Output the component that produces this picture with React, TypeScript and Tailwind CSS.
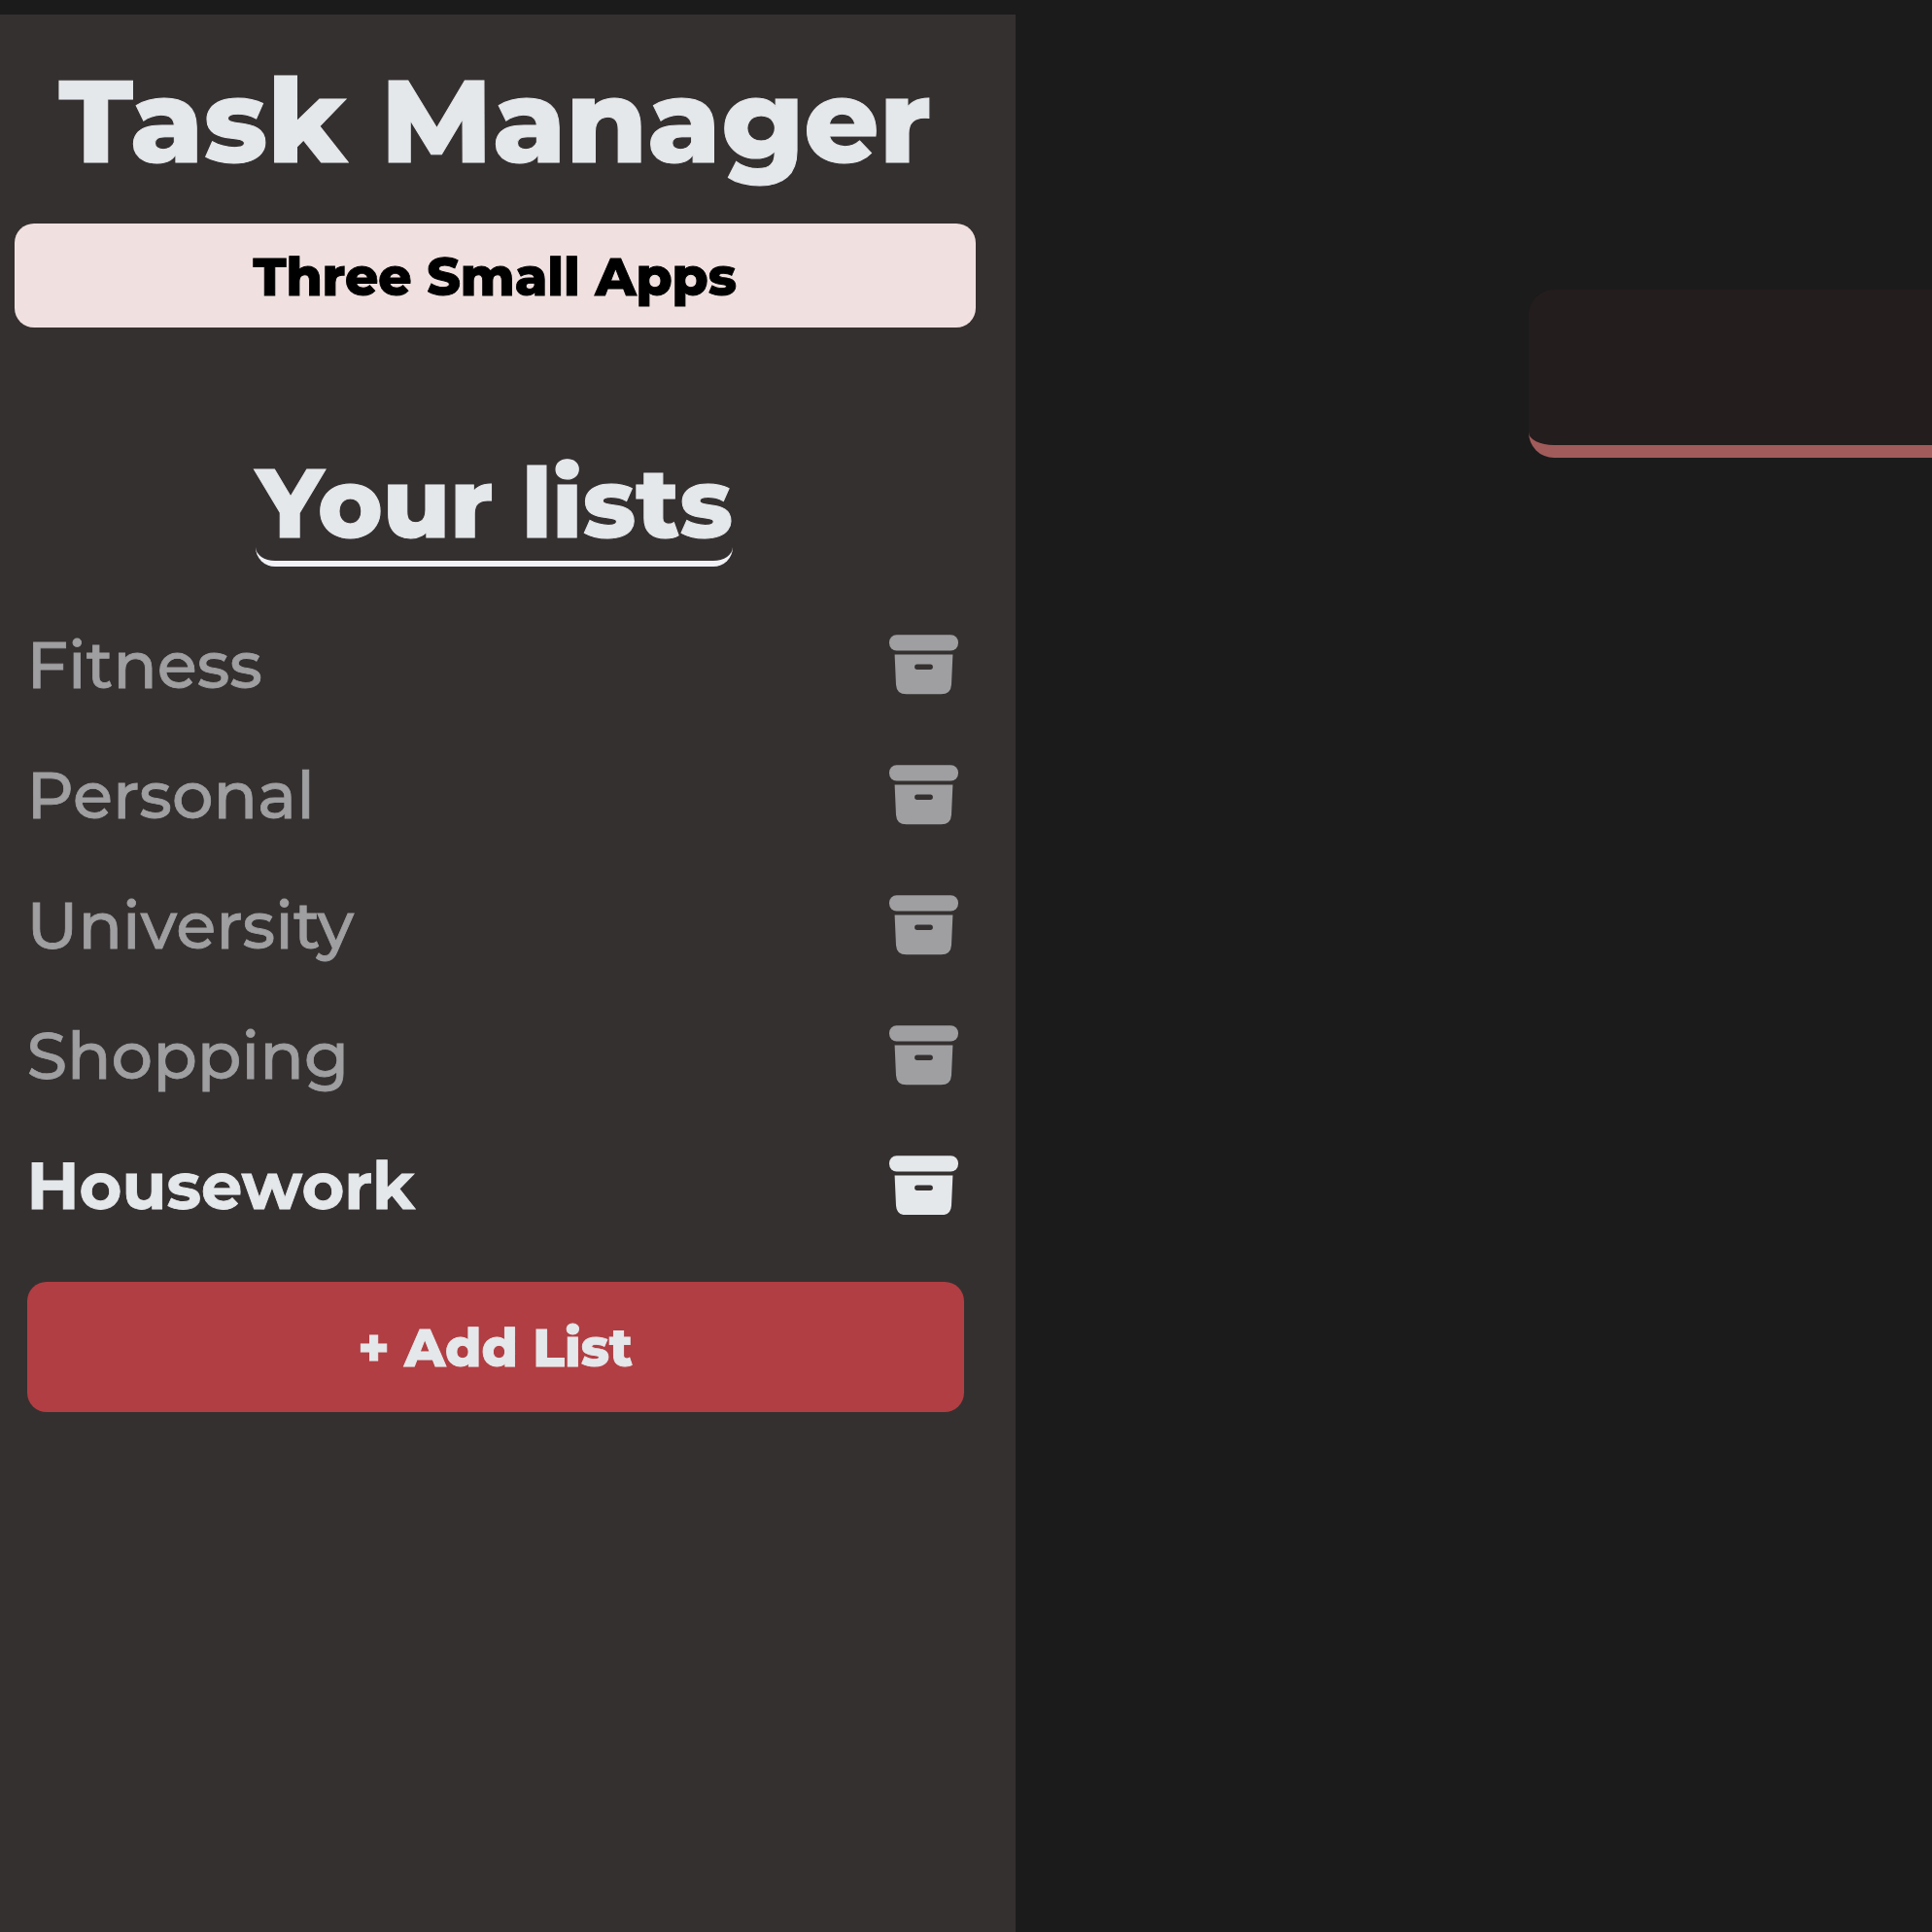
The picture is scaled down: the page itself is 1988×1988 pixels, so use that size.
type TaskList = { name: string; active?: boolean };

const lists: TaskList[] = [
  { name: "Fitness" },
  { name: "Personal" },
  { name: "University" },
  { name: "Shopping" },
  { name: "Housework", active: true },
];

function ArchiveIcon() {
  return (
    <svg className="h-[61.5px] w-[71px]" viewBox="0 0 71 61.5" fill="currentColor" aria-hidden="true">
      <rect x="0" y="0.2" width="71" height="16.2" rx="7.6" />
      <path
        fillRule="evenodd"
        d="M5.6 20.5H65.4L64 51.4Q63.4 61.3 53.4 61.3H17.6Q7.6 61.3 7 51.4ZM28.8 30.5A2.7 2.7 0 0 0 28.8 35.9H42.2A2.7 2.7 0 0 0 42.2 30.5Z"
      />
    </svg>
  );
}

function ListRow({ name, active }: TaskList) {
  return (
    <li
      className={
        active
          ? "flex h-[133.9px] items-center justify-between font-bold text-[#e5e8eb]"
          : "flex h-[133.9px] items-center justify-between font-medium text-[#9f9fa1]"
      }
    >
      <span className="text-[67px] leading-[82px] [-webkit-text-stroke:0.8px]">{name}</span>
      <ArchiveIcon />
    </li>
  );
}

export default function App() {
  return (
    <div className="flex h-[1988px] w-[1988px] overflow-hidden bg-[#1b1b1b] pt-[15px] font-['Montserrat','Inter',sans-serif]">
      <aside className="flex w-[1045px] shrink-0 flex-col bg-[#353030] pt-[34px] pr-[41px] pl-[14.5px]">
        <h1 className="text-center text-[120.4px] leading-[150px] font-extrabold whitespace-nowrap text-[#e5e8eb] [-webkit-text-stroke:1px]">
          Task Manager
        </h1>
        <button className="mt-[31px] h-[107px] rounded-[20px] bg-[#f0e1e0] pt-[3px] text-[53.5px] leading-none font-extrabold text-black [-webkit-text-stroke:0.9px]">
          Three Small Apps
        </button>
        <h2 className="mt-[121px] mr-[1px] self-center rounded-[20px] border-b-[6px] border-[#f1f2f5] text-[100.3px] leading-[119px] font-extrabold whitespace-nowrap text-[#e5e8eb] [-webkit-text-stroke:1px]">
          Your lists
        </h2>
        <ul className="mt-[34.2px] pr-[18.2px] pl-[12.9px]">
          {lists.map((list) => (
            <ListRow key={list.name} {...list} />
          ))}
        </ul>
        <button className="mr-[12.5px] ml-[13px] mt-[32.8px] h-[134px] rounded-[20px] bg-[#b13e43] text-[53.5px] leading-none font-extrabold text-[#e5e8eb] [-webkit-text-stroke:0.9px]">
          + Add List
        </button>
      </aside>
      <main className="flex-1 overflow-hidden pt-[283px] pl-[528px]">
        <div className="h-[173px] w-[900px] rounded-[26px] border-b-[13px] border-[#a15b5b] bg-[#241d1d]" />
      </main>
    </div>
  );
}
